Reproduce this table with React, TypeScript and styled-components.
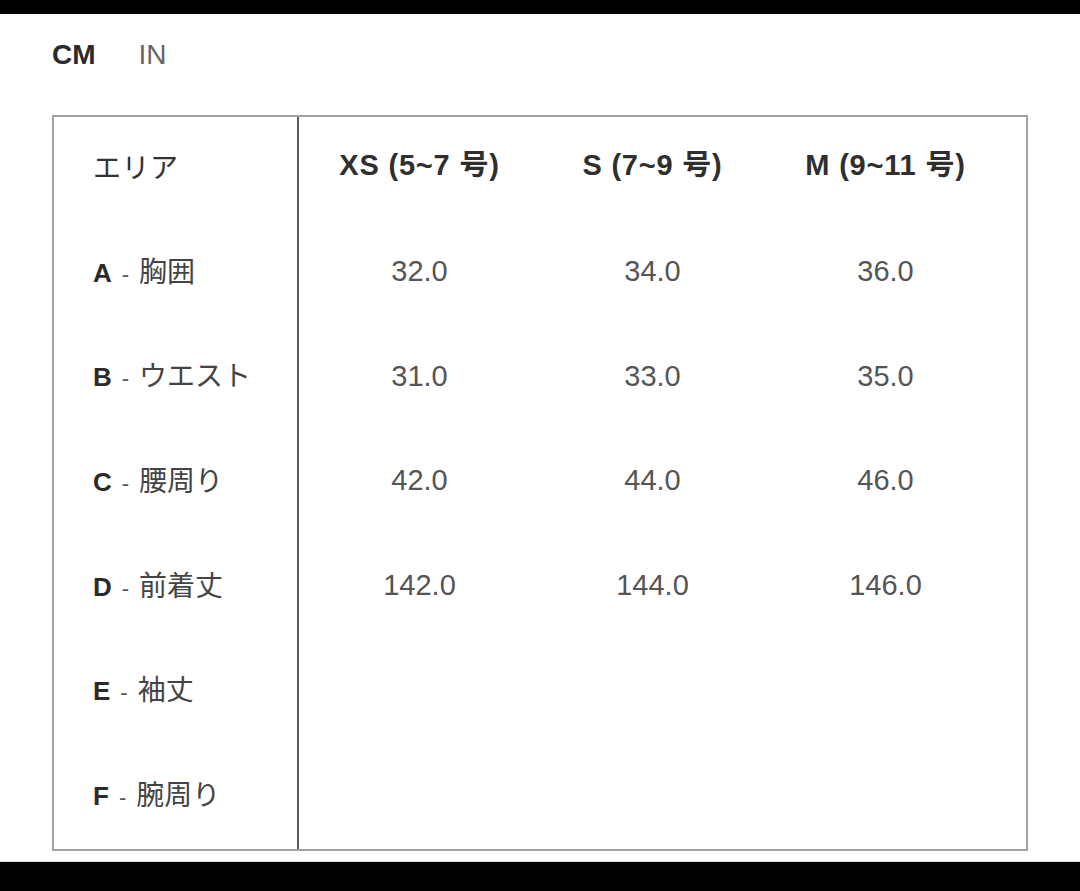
import React, { useState } from 'react';
import styled, { createGlobalStyle } from 'styled-components';

type Unit = 'CM' | 'IN';

interface SizeRow {
  code: string;
  name: string;
  values: string[];
}

const sizes = ['XS (5~7 号)', 'S (7~9 号)', 'M (9~11 号)'];

const rows: SizeRow[] = [
  { code: 'A', name: '胸囲', values: ['32.0', '34.0', '36.0'] },
  { code: 'B', name: 'ウエスト', values: ['31.0', '33.0', '35.0'] },
  { code: 'C', name: '腰周り', values: ['42.0', '44.0', '46.0'] },
  { code: 'D', name: '前着丈', values: ['142.0', '144.0', '146.0'] },
  { code: 'E', name: '袖丈', values: ['', '', ''] },
  { code: 'F', name: '腕周り', values: ['', '', ''] },
];

const GlobalStyle = createGlobalStyle`
  html, body {
    margin: 0;
    padding: 0;
    background: #000;
    font-family: 'Liberation Sans', 'Noto Sans CJK JP', Arial, sans-serif;
  }
`;

const App: React.FC = () => {
  const [unit, setUnit] = useState<Unit>('CM');

  return (
    <Page>
      <GlobalStyle />
      <Bar height={14} />
      <Content>
        <Units>
          <UnitButton active={unit === 'CM'} onClick={() => setUnit('CM')}>
            CM
          </UnitButton>
          <UnitButton active={unit === 'IN'} onClick={() => setUnit('IN')}>
            IN
          </UnitButton>
        </Units>
        <Table>
          <LabelColumn>
            <LabelCell>
              <AreaTitle>エリア</AreaTitle>
            </LabelCell>
            {rows.map((r) => (
              <LabelCell key={r.code}>
                <Label>
                  <Code>{r.code}</Code>
                  <Dash>-</Dash>
                  <AreaName>{r.name}</AreaName>
                </Label>
              </LabelCell>
            ))}
          </LabelColumn>
          <ValueGrid>
            {sizes.map((s) => (
              <HeadCell key={s}>{s}</HeadCell>
            ))}
            {rows.map((r) =>
              r.values.map((v, i) => <ValueCell key={r.code + i}>{v}</ValueCell>)
            )}
          </ValueGrid>
        </Table>
      </Content>
      <Bar height={29} />
    </Page>
  );
};

const Page = styled.div`
  display: flex;
  flex-direction: column;
  width: 1080px;
  height: 891px;
  background: #000;
`;

const Bar = styled.div<{ height: number }>`
  height: ${(p) => p.height}px;
  flex-shrink: 0;
  background: #000;
`;

const Content = styled.div`
  flex: 1;
  background: #fff;
  padding: 24px 52px 0 52px;
  border-bottom: 1px solid #ddd;
`;

const Units = styled.div`
  display: flex;
  gap: 43px;
  height: 34px;
  align-items: center;
`;

const UnitButton = styled.span<{ active: boolean }>`
  font-family: 'Liberation Sans', Arial, sans-serif;
  font-size: 28px;
  line-height: 1;
  font-weight: ${(p) => (p.active ? 700 : 400)};
  color: ${(p) => (p.active ? '#2b2b2b' : '#666')};
  cursor: pointer;
`;

const Table = styled.div`
  margin-top: 43px;
  width: 976px;
  height: 736px;
  box-sizing: border-box;
  border: 2px solid #a2a2a2;
  display: flex;
`;

const LabelColumn = styled.div`
  width: 243px;
  border-right: 2px solid #5a5a5a;
  display: grid;
  grid-template-rows: repeat(7, 1fr);
`;

const LabelCell = styled.div`
  display: flex;
  align-items: center;
  padding-left: 39px;
  padding-bottom: 6px;
  line-height: 1;
`;

const Label = styled.div`
  display: flex;
  align-items: baseline;
  gap: 10px;
`;

const AreaTitle = styled.span`
  font-family: 'Noto Sans CJK JP', sans-serif;
  font-size: 28px;
  color: #333;
  letter-spacing: 0.5px;
`;

const Code = styled.span`
  font-family: 'Liberation Sans', Arial, sans-serif;
  font-size: 26px;
  font-weight: 700;
  color: #2b2b2b;
`;

const Dash = styled.span`
  font-family: 'Liberation Sans', Arial, sans-serif;
  font-size: 22px;
  color: #555;
`;

const AreaName = styled.span`
  font-family: 'Noto Sans CJK JP', sans-serif;
  font-size: 28px;
  color: #444;
`;

const ValueGrid = styled.div`
  flex: 1;
  display: grid;
  grid-template-columns: repeat(3, 233px);
  grid-template-rows: repeat(7, 1fr);
  padding-left: 4px;
`;

const HeadCell = styled.div`
  display: flex;
  align-items: center;
  justify-content: center;
  padding-bottom: 8px;
  line-height: 1;
  font-family: 'Liberation Sans', 'Noto Sans CJK JP', Arial, sans-serif;
  font-size: 29px;
  font-weight: 700;
  letter-spacing: 0.8px;
  color: #2f2f2f;
`;

const ValueCell = styled.div`
  display: flex;
  align-items: center;
  justify-content: center;
  padding-bottom: 4px;
  line-height: 1;
  font-family: 'Liberation Sans', Arial, sans-serif;
  font-size: 29px;
  color: #555;
`;

export default App;
